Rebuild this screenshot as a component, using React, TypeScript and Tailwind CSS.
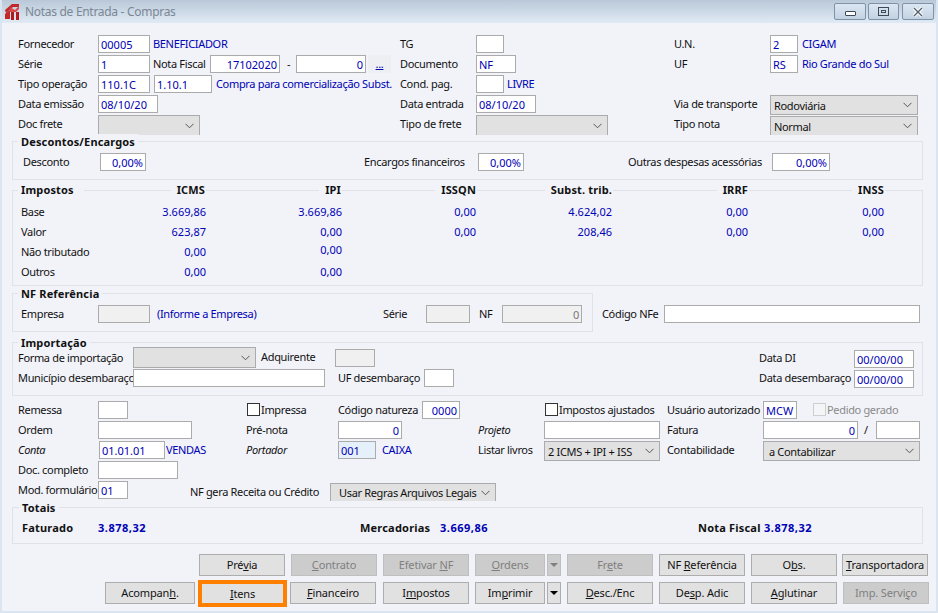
import React from "react";

const BLUE = "text-[#0000b4]";

function L({ w, c = "", children }: { w: string; c?: string; children?: React.ReactNode }) {
  return <div className={`${w} ${c} h-[18px] leading-[18px] whitespace-nowrap shrink-0`}>{children}</div>;
}
function T({ w, c = "", children }: { w: string; c?: string; children?: React.ReactNode }) {
  return <div className={`${w} ${c} ${BLUE} h-[18px] leading-[18px] whitespace-nowrap overflow-hidden shrink-0`}>{children}</div>;
}
function I({ w, c = "", bg = "bg-white", right, children }: { w: string; c?: string; bg?: string; right?: boolean; children?: React.ReactNode }) {
  return (
    <div className={`${w} ${c} ${bg} h-[18px] border border-[#ababab] ${BLUE} tracking-normal leading-[17px] px-[2px] whitespace-nowrap overflow-hidden shrink-0 ${right ? "text-right" : ""}`}>
      {children}
    </div>
  );
}
function Chevron() {
  return (
    <svg width="9" height="6" viewBox="0 0 9 6" className="shrink-0">
      <path d="M0.5 0.8 L4.5 4.8 L8.5 0.8" fill="none" stroke="#555" strokeWidth="1" />
    </svg>
  );
}
function S({ w, c = "", h = "h-[20px]", children }: { w: string; c?: string; h?: string; children?: React.ReactNode }) {
  return (
    <div className={`${w} ${h} ${c} border border-[#ababab] bg-[#e1e1e1] text-[#111] flex items-center justify-between pl-[3px] pr-[5px] whitespace-nowrap shrink-0`}>
      <span className="pt-[2px]">{children}</span>
      <Chevron />
    </div>
  );
}
function Check({ c = "", disabled }: { c?: string; disabled?: boolean }) {
  return <div className={`w-[13px] h-[13px] border ${disabled ? "border-[#cfcfcf] bg-[#f4f5f9]" : "border-[#333] bg-white"} shrink-0 mt-[2px] ${c}`} />;
}
function Legend({ c = "", children }: { c?: string; children?: React.ReactNode }) {
  return <div className={`font-bold tracking-[0.15px] text-[#111] bg-[#f1f3f9] px-[3px] h-[16px] leading-[16px] whitespace-nowrap shrink-0 ${c}`}>{children}</div>;
}
function B({ w, c = "", off, children }: { w: string; c?: string; off?: boolean; children?: React.ReactNode }) {
  return (
    <div className={`${w} ${c} h-[22px] leading-[20px] tracking-[-0.15px] text-center border shrink-0 ${off ? "bg-[#cccccc] border-[#bfbfbf] text-[#808080]" : "bg-[#e1e1e1] border-[#adadad] text-[#111]"}`}>
      {children}
    </div>
  );
}
function Arrow({ c = "", off }: { c?: string; off?: boolean }) {
  return (
    <div className={`w-[14px] h-[22px] border flex items-center justify-center shrink-0 ${off ? "bg-[#cccccc] border-[#bfbfbf]" : "bg-[#e1e1e1] border-[#adadad]"} ${c}`}>
      <svg width="8" height="4" viewBox="0 0 8 4"><path d="M0 0 H8 L4 4 Z" fill={off ? "#808080" : "#000"} /></svg>
    </div>
  );
}
function U({ children }: { children: React.ReactNode }) {
  return <span className="underline underline-offset-1">{children}</span>;
}
function WinBtn({ w, c = "", children }: { w: string; c?: string; children?: React.ReactNode }) {
  return (
    <div className={`${w} ${c} h-[17px] rounded-[2px] border border-[#7f93a8] bg-gradient-to-b from-[#dbe6f2] to-[#c3d2e2] flex items-center justify-center shrink-0`}>
      {children}
    </div>
  );
}
const RV = ({ w, c = "", children }: { w: string; c?: string; children?: React.ReactNode }) => (
  <div className={`${w} ${c} ${BLUE} tracking-normal text-right h-[18px] leading-[18px] shrink-0`}>{children}</div>
);
function H({ w, children }: { w: string; children: React.ReactNode }) {
  return (
    <div className={`${w} text-right shrink-0`}>
      <span className="bg-[#f1f3f9] inline-block h-[16px] leading-[16px] pl-[6px] pr-[1px]">{children}</span>
    </div>
  );
}

export default function App() {
  return (
    <div className="w-[938px] h-[613px] overflow-hidden bg-[#f1f3f9] text-[#111] text-[11px] tracking-[-0.33px] flex flex-col border-l-2 border-r-2 border-b-2 border-[#dbe5f1] font-['Noto_Sans',sans-serif]">
      {/* title bar */}
      <div className="h-[23px] -mx-[2px] shrink-0 bg-gradient-to-b from-[#b9c8d8] to-[#e0eaf5] flex items-center pl-[5px] pr-[4px]">
        <svg width="15" height="16" viewBox="0 0 15 16" className="shrink-0">
          <path d="M0 6 L7 0 H14 V3 L8 3 L1 9 Z M0 10 L5 6 V15 H0 Z" fill="#c0282a" />
          <path d="M5 3 L10 6 L14 2 V5 L11 8 H5 Z" fill="#d9484a" />
          <rect x="6" y="8" width="3" height="8" fill="#b5181c" />
          <rect x="11" y="8" width="3" height="8" fill="#b5181c" />
        </svg>
        <div className="ml-[5px] text-[12px] tracking-[-0.3px] text-[#7b8794] whitespace-nowrap">Notas de Entrada - Compras</div>
        <div className="flex-1" />
        <WinBtn w="w-[32px]"><div className="w-[11px] h-[5px] border border-[#3c4a58] bg-white rounded-[1px] mt-[3px]" /></WinBtn>
        <WinBtn w="w-[31px]" c="ml-[2px]"><div className="w-[11px] h-[9px] border border-[#3c4a58] flex items-center justify-center"><div className="w-[5px] h-[3px] border border-[#3c4a58]" /></div></WinBtn>
        <WinBtn w="w-[32px]" c="ml-[3px]">
          <svg width="12" height="10" viewBox="0 0 12 10"><path d="M2 1 L10 9 M10 1 L2 9" stroke="#fff" strokeWidth="3.4" /><path d="M2 1 L10 9 M10 1 L2 9" stroke="#55616e" strokeWidth="1.4" /></svg>
        </WinBtn>
      </div>

      {/* top fields */}
      <div className="pt-[12px] pl-[16px] flex flex-col">
        <div className="h-[20px] flex">
          <L w="w-[80px]">Fornecedor</L><I w="w-[52px]">00005</I><T w="w-[247px]" c="ml-[3px]">BENEFICIADOR</T>
          <L w="w-[76px]">TG</L><I w="w-[28px]" /><L w="w-[170px]" /><L w="w-[96px]">U.N.</L><I w="w-[28px]">2</I><T w="w-[100px]" c="ml-[4px]">CIGAM</T>
        </div>
        <div className="h-[20px] flex">
          <L w="w-[80px]">Série</L><I w="w-[52px]">1</I><L w="w-[60px]" c="pl-[3px]">Nota Fiscal</L><I w="w-[70px]" right>17102020</I><L w="w-[16px]" c="pl-[7px]">-</L><I w="w-[70px]" right>0</I>
          <div className={`w-[23px] h-[18px] ml-[2px] shrink-0 bg-[#eeeff3] text-center underline leading-[18px] ${BLUE}`}>...</div>
          <L w="w-[85px]" c="pl-[9px]">Documento</L><I w="w-[40px]">NF</I><L w="w-[158px]" /><L w="w-[96px]">UF</L><I w="w-[28px]">RS</I><T w="w-[110px]" c="ml-[4px]">Rio Grande do Sul</T>
        </div>
        <div className="h-[20px] flex">
          <L w="w-[80px]">Tipo operação</L><I w="w-[52px]">110.1C</I><I w="w-[58px]" c="ml-[4px]">1.10.1</I><T w="w-[176px]" c="ml-[4px]">Compra para comercialização Subst. T</T>
          <L w="w-[84px]" c="pl-[8px]">Cond. pag.</L><I w="w-[28px]" /><T w="w-[166px]" c="ml-[3px]">LIVRE</T>
        </div>
        <div className="h-[20px] flex">
          <L w="w-[80px]">Data emissão</L><I w="w-[60px]">08/10/20</I><L w="w-[242px]" /><L w="w-[76px]">Data entrada</L><I w="w-[60px]">08/10/20</I><L w="w-[138px]" /><L w="w-[96px]">Via de transporte</L><S w="w-[148px]">Rodoviária</S>
        </div>
        <div className="h-[20px] flex">
          <L w="w-[80px]">Doc frete</L><S w="w-[102px]" c="border-b-0" /><L w="w-[200px]" /><L w="w-[76px]">Tipo de frete</L><S w="w-[132px]" c="border-b-0" /><L w="w-[66px]" /><L w="w-[96px]">Tipo nota</L><S w="w-[148px]" h="h-[19px]" c="border-b-0 mt-[1px]">Normal</S>
        </div>
      </div>

      {/* Descontos */}
      <div className="ml-[10px] mt-[6px] w-[911px] h-[39px] border border-[#dfe2e8] shrink-0 pl-[8px]">
        <div className="-mt-[8px] flex"><Legend c="-ml-[3px]">Descontos/Encargos</Legend></div>
        <div className="flex mt-[3px] pl-[2px]">
          <L w="w-[77px]">Desconto</L><I w="w-[46px]" right>0,00%</I><L w="w-[218px]" /><L w="w-[114px]">Encargos financeiros</L><I w="w-[46px]" right>0,00%</I><L w="w-[104px]" /><L w="w-[144px]">Outras despesas acessórias</L><I w="w-[58px]" right>0,00%</I>
        </div>
      </div>

      {/* Impostos */}
      <div className="ml-[10px] mt-[10px] w-[911px] h-[96px] border border-[#dfe2e8] shrink-0 pl-[8px]">
        <div className="-mt-[9px] flex font-bold tracking-[0.15px]">
          <Legend c="w-[66px] -ml-[3px]">Impostos</Legend>
          <H w="w-[122px]">ICMS</H>
          <H w="w-[136px]">IPI</H>
          <H w="w-[135px]">ISSQN</H>
          <H w="w-[136px]">Subst. trib.</H>
          <H w="w-[136px]">IRRF</H>
          <H w="w-[136px]">INSS</H>
        </div>
        <div className="mt-[4px] flex flex-col">
          <div className="h-[20px] flex"><L w="w-[100px]">Base</L><RV w="w-[85px]">3.669,86</RV><RV w="w-[136px]">3.669,86</RV><RV w="w-[134px]">0,00</RV><RV w="w-[136px]">4.624,02</RV><RV w="w-[136px]">0,00</RV><RV w="w-[136px]">0,00</RV></div>
          <div className="h-[20px] flex"><L w="w-[100px]">Valor</L><RV w="w-[85px]">623,87</RV><RV w="w-[136px]">0,00</RV><RV w="w-[134px]">0,00</RV><RV w="w-[136px]">208,46</RV><RV w="w-[136px]">0,00</RV><RV w="w-[136px]">0,00</RV></div>
          <div className="h-[20px] flex"><L w="w-[100px]">Não tributado</L><RV w="w-[85px]">0,00</RV><RV w="w-[136px]" c="-mt-[2px]">0,00</RV></div>
          <div className="h-[20px] flex"><L w="w-[100px]">Outros</L><RV w="w-[85px]">0,00</RV><RV w="w-[136px]">0,00</RV></div>
        </div>
      </div>

      {/* NF Referencia */}
      <div className="ml-[10px] mt-[7px] flex shrink-0">
        <div className="w-[581px] h-[39px] border border-[#dfe2e8] pl-[8px] shrink-0">
          <div className="-mt-[8px] flex"><Legend c="-ml-[3px]">NF Referência</Legend></div>
          <div className="flex mt-[3px]">
            <L w="w-[77px]">Empresa</L><I w="w-[52px]" bg="bg-[#f0f0f0]" /><T w="w-[226px]" c="ml-[7px]">(Informe a Empresa)</T><L w="w-[43px]">Série</L><I w="w-[44px]" bg="bg-[#f0f0f0]" /><L w="w-[32px]" c="pl-[9px]">NF</L>
            <div className="w-[80px] h-[18px] border border-[#ababab] bg-[#f0f0f0] text-[#777] text-right leading-[17px] pr-[2px] shrink-0">0</div>
          </div>
        </div>
        <div className="flex pt-[12px] pl-[9px]">
          <L w="w-[62px]">Código NFe</L><I w="w-[256px]" />
        </div>
      </div>

      {/* Importacao */}
      <div className="ml-[10px] mt-[10px] w-[911px] h-[54px] border border-[#dfe2e8] shrink-0 pl-[5px]">
        <div className="-mt-[8px] flex"><Legend>Importação</Legend></div>
        <div className="h-[22px] flex -mt-[4px]">
          <L w="w-[115px]" c="mt-[2px]">Forma de importação</L>
          <S w="w-[123px]" h="h-[21px]" />
          <L w="w-[74px]" c="ml-[5px] mt-[1px]">Adquirente</L>
          <I w="w-[40px]" c="mt-[2px]" bg="bg-[#f0f0f0]" />
          <L w="w-[384px]" />
          <L w="w-[95px]" c="mt-[2px]">Data DI</L><I w="w-[60px]" c="mt-[3px]">00/00/00</I>
        </div>
        <div className="h-[20px] flex">
          <L w="w-[115px]">Município desembaraço</L><I w="w-[192px]" /><L w="w-[99px]" c="pl-[13px]">UF desembaraço</L><I w="w-[30px]" /><L w="w-[305px]" /><L w="w-[95px]">Data desembaraço</L><I w="w-[60px]" c="mt-[1px]">00/00/00</I>
        </div>
      </div>

      {/* lower fields */}
      <div className="pt-[5px] pl-[16px] flex flex-col shrink-0">
        <div className="h-[20px] flex">
          <L w="w-[80px]">Remessa</L><I w="w-[30px]" /><L w="w-[119px]" /><Check /><L w="w-[78px]" c="pl-[1px]">Impressa</L><L w="w-[84px]">Código natureza</L><I w="w-[38px]" right>0000</I><L w="w-[85px]" /><Check /><L w="w-[109px]" c="pl-[1px]">Impostos ajustados</L><L w="w-[96px]">Usuário autorizado</L><I w="w-[34px]">MCW</I><L w="w-[16px]" /><Check disabled /><L w="w-[80px]" c="pl-[1px] text-[#8a8a8a]">Pedido gerado</L>
        </div>
        <div className="h-[20px] flex">
          <L w="w-[80px]">Ordem</L><I w="w-[94px]" /><L w="w-[54px]" /><L w="w-[92px]">Pré-nota</L><I w="w-[64px]" right>0</I><L w="w-[76px]" /><L w="w-[66px]" c="italic">Projeto</L><I w="w-[116px]" /><L w="w-[103px]" c="pl-[7px]">Fatura</L><I w="w-[95px]" right>0</I><L w="w-[18px]" c="pl-[6px]">/</L><I w="w-[44px]" />
        </div>
        <div className="h-[20px] flex">
          <L w="w-[81px]" c="italic">Conta</L><I w="w-[66px]">01.01.01</I><T w="w-[80px]" c="ml-[1px]">VENDAS</T><L w="w-[92px]" c="italic">Portador</L><I w="w-[38px]" bg="bg-[#e6f0fb]" c="border-[#808890]">001</I><T w="w-[96px]" c="ml-[6px]">CAIXA</T><L w="w-[66px]">Listar livros</L><S w="w-[116px]">2 ICMS + IPI + ISS</S><L w="w-[103px]" c="pl-[7px]">Contabilidade</L><S w="w-[157px]" c="pl-[5px]">a Contabilizar</S>
        </div>
        <div className="h-[20px] flex">
          <L w="w-[80px]">Doc. completo</L><I w="w-[80px]" />
        </div>
        <div className="h-[20px] flex">
          <L w="w-[80px]">Mod. formulário</L><I w="w-[30px]">01</I><L w="w-[62px]" />
          <L w="w-[140px]" c="mt-[2px]">NF gera Receita ou Crédito</L>
          <S w="w-[166px]" h="h-[18px]" c="mt-[2px] border-b-0 pl-[8px]">Usar Regras Arquivos Legais</S>
        </div>
      </div>

      {/* Totais */}
      <div className="ml-[10px] mt-[6px] w-[911px] h-[37px] border border-[#dfe2e8] shrink-0 pl-[8px]">
        <div className="-mt-[8px] flex"><Legend c="-ml-[2px]">Totais</Legend></div>
        <div className="flex font-bold tracking-[0.2px] mt-[3px] pl-[1px]">
          <L w="w-[76px]">Faturado</L><T w="w-[262px]" c="tracking-[0.5px]">3.878,32</T><L w="w-[80px]">Mercadorias</L><T w="w-[258px]" c="tracking-[0.5px]">3.669,86</T><L w="w-[66px]">Nota Fiscal</L><T w="w-[100px]" c="tracking-[0.5px]">3.878,32</T>
        </div>
      </div>

      {/* buttons */}
      <div className="mt-[10px] pl-[197px] flex gap-[6px] shrink-0">
        <B w="w-[86px]">Pré<U>v</U>ia</B>
        <B w="w-[86px]" off><U>C</U>ontrato</B>
        <B w="w-[86px]" off>Efetivar <U>N</U>F</B>
        <div className="flex gap-[2px] shrink-0">
          <B w="w-[70px]" off><U>O</U>rdens</B>
          <Arrow off />
        </div>
        <B w="w-[86px]" off>Fr<U>e</U>te</B>
        <B w="w-[86px]">NF <U>R</U>eferência</B>
        <B w="w-[86px]">O<U>b</U>s.</B>
        <B w="w-[86px]" c="-ml-[1px]"><U>T</U>ransportadora</B>
      </div>
      <div className="mt-[6px] h-[22px] pl-[103px] flex items-center shrink-0">
        <B w="w-[90px]">Acompan<U>h</U>.</B>
        <div className="ml-[3px] w-[89px] h-[27px] border-[4px] border-[#ff8000] bg-[#e1e1e1] tracking-[-0.15px] text-center leading-[19px] shrink-0"><U>I</U>tens</div>
        <B w="w-[86px]" c="ml-[3px]"><U>F</U>inanceiro</B>
        <B w="w-[86px]" c="ml-[7px]">I<U>m</U>postos</B>
        <B w="w-[70px]" c="ml-[6px]">Im<U>p</U>rimir</B>
        <Arrow c="ml-[2px]" />
        <B w="w-[86px]" c="ml-[6px]"><U>D</U>esc./Enc</B>
        <B w="w-[86px]" c="ml-[6px]">De<U>s</U>p. Adic</B>
        <B w="w-[86px]" c="ml-[6px]"><U>A</U>glutinar</B>
        <B w="w-[86px]" c="ml-[6px]" off>Imp. Servi<U>ç</U>o</B>
      </div>
    </div>
  );
}
